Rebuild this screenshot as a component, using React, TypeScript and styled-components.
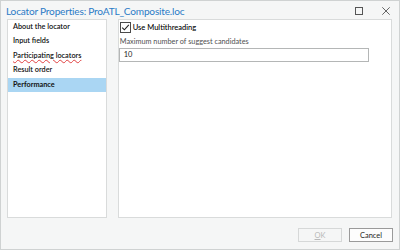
import React from "react";
import styled, { createGlobalStyle } from "styled-components";

const Global = createGlobalStyle`
  html, body { margin: 0; padding: 0; background: #f5f6f6; }
  body { font-family: Lato, "Noto Sans", sans-serif; }
`;

const Window = styled.div`
  box-sizing: border-box;
  width: 400px;
  height: 250px;
  border: 1px solid #cfd2d2;
  background: #f5f6f6;
  display: flex;
  flex-direction: column;
`;

const TitleBar = styled.div`
  height: 18px;
  display: flex;
  align-items: center;
  padding: 0 0 0 5px;
`;

const Title = styled.div`
  flex: 1;
  font-size: 10.1px;
  letter-spacing: -0.2px;
  color: #2b7bc6;
  white-space: nowrap;
  margin-top: 1px;
`;

const WinButton = styled.div`
  width: 27px;
  height: 18px;
  display: flex;
  align-items: center;
  justify-content: center;
  margin-top: 2px;
`;

const Body = styled.div`
  display: flex;
  gap: 11px;
  padding: 0 7px 0 6px;
  height: 199px;
`;

const Panel = styled.div<{ $w: number }>`
  box-sizing: border-box;
  width: ${(p) => p.$w}px;
  height: 100%;
  background: #ffffff;
  border: 1px solid #d9dbdb;
`;

const List = styled.div`
  display: flex;
  flex-direction: column;
`;

const Item = styled.div<{ $sel?: boolean; $squig?: boolean }>`
  height: 14.4px;
  line-height: 14.4px;
  padding-left: 5px;
  font-size: 7.3px;
  font-weight: ${(p) => (p.$sel ? 700 : 600)};
  color: #111;
  background: ${(p) => (p.$sel ? "#aad6f3" : "transparent")};
  white-space: nowrap;
  span {
    text-decoration: ${(p) => (p.$squig ? "underline wavy #e04040" : "none")};
    text-decoration-thickness: 0.5px;
    text-underline-offset: 1px;
  }
`;

const Content = styled.div`
  display: flex;
  flex-direction: column;
  padding: 1px 0 0 0;
`;

const CheckRow = styled.div`
  display: flex;
  align-items: center;
  gap: 2px;
  height: 13px;
  padding-left: 1px;
  font-size: 7.5px;
  font-weight: 500;
  color: #000;
`;

const Box = styled.div`
  box-sizing: border-box;
  width: 11px;
  height: 11px;
  border: 1px solid #4a4a4a;
  background: #fff;
  display: flex;
  align-items: center;
  justify-content: center;
`;

const Label = styled.div`
  font-size: 7.3px;
  color: #505050;
  margin-top: 3px;
  padding-left: 1px;
  height: 10px;
  line-height: 10px;
`;

const Input = styled.div`
  box-sizing: border-box;
  margin-top: 1px;
  width: 250px;
  height: 14px;
  border: 1px solid #b4b6b6;
  font-size: 7.5px;
  color: #222;
  padding-left: 4px;
  line-height: 12px;
`;

const Footer = styled.div`
  display: flex;
  justify-content: flex-end;
  gap: 7px;
  padding: 10px 6px 0 0;
`;

const Button = styled.div<{ $disabled?: boolean }>`
  box-sizing: border-box;
  width: 44px;
  height: 14px;
  border: 1px solid ${(p) => (p.$disabled ? "#d6d8d8" : "#9a9a9a")};
  background: ${(p) => (p.$disabled ? "#f5f6f6" : "#fdfdfd")};
  color: ${(p) => (p.$disabled ? "#b8b8b8" : "#1e1e1e")};
  font-size: 7.5px;
  display: flex;
  align-items: center;
  justify-content: center;
  u { text-decoration: underline; }
`;

export default function App() {
  return (
    <>
      <Global />
      <Window>
        <TitleBar>
          <Title>Locator Properties: ProATL_Composite.loc</Title>
          <WinButton>
            <svg width="8" height="8" viewBox="0 0 8 8">
              <rect x="0.5" y="0.5" width="7" height="7" fill="none" stroke="#555" strokeWidth="1" />
            </svg>
          </WinButton>
          <WinButton>
            <svg width="8" height="8" viewBox="0 0 8 8">
              <path d="M0.3 0.3 L7.7 7.7 M7.7 0.3 L0.3 7.7" stroke="#555" strokeWidth="0.9" />
            </svg>
          </WinButton>
        </TitleBar>
        <Body>
          <Panel $w={100}>
            <List>
              <Item>About the locator</Item>
              <Item>Input fields</Item>
              <Item $squig><span>Participating locators</span></Item>
              <Item>Result order</Item>
              <Item $sel>Performance</Item>
            </List>
          </Panel>
          <Panel $w={275}>
            <Content>
              <CheckRow>
                <Box>
                  <svg width="9" height="9" viewBox="0 0 9 9">
                    <path d="M1.2 4.6 L3.4 6.8 L7.8 1.8" fill="none" stroke="#222" strokeWidth="1.1" />
                  </svg>
                </Box>
                Use Multithreading
              </CheckRow>
              <Label>Maximum number of suggest candidates</Label>
              <Input>10</Input>
            </Content>
          </Panel>
        </Body>
        <Footer>
          <Button $disabled><u>O</u>K</Button>
          <Button>Cancel</Button>
        </Footer>
      </Window>
    </>
  );
}
